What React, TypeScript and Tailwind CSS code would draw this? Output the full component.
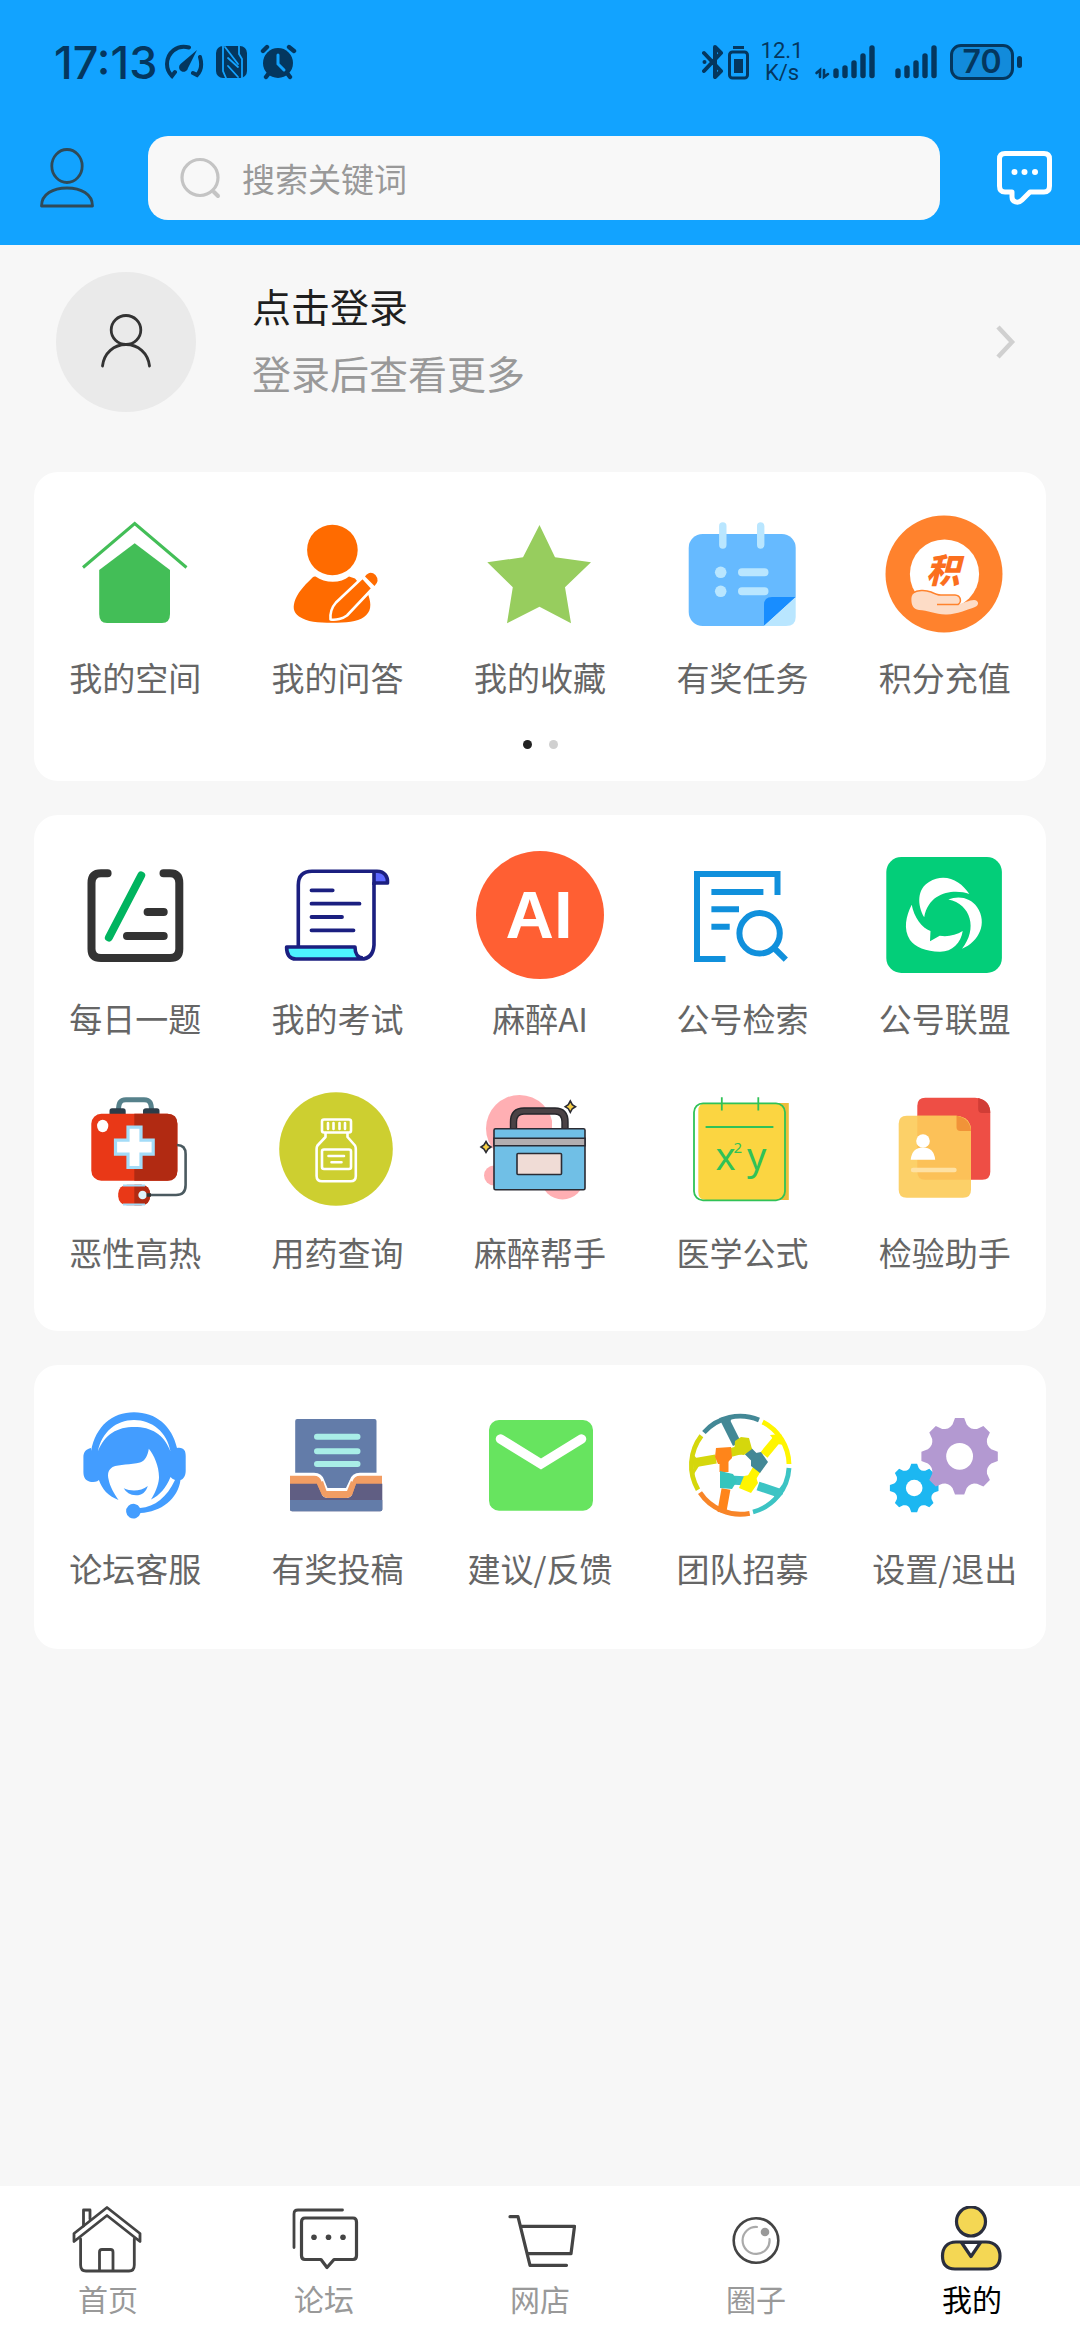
import type { ReactNode } from "react";

type Item = { label: string; icon: ReactNode };

// outline of an eight-toothed gear
const gearPath = (cx: number, cy: number, outer: number, inner: number) => {
  const points: string[] = [];
  for (let i = 0; i < 8; i++) {
    const base = (i * Math.PI) / 4 - Math.PI / 2;
    const at = (r: number, a: number) =>
      `${(cx + r * Math.cos(base + a)).toFixed(1)} ${(cy + r * Math.sin(base + a)).toFixed(1)}`;
    points.push(at(inner, -0.22), at(outer, -0.12), at(outer, 0.12), at(inner, 0.22));
    points.push(at(inner * 0.95, 0.3), at(inner * 0.93, 0.3927), at(inner * 0.95, 0.4854));
  }
  return `M${points.join("L")}Z`;
};

const Svg = ({ children }: { children: ReactNode }) => (
  <svg viewBox="0 0 128 128" className="size-32" fill="none" aria-hidden="true">
    {children}
  </svg>
);

const TabSvg = ({ children }: { children: ReactNode }) => (
  <svg viewBox="0 0 72 72" className="size-18" fill="none" stroke="#444" strokeWidth="3.2" strokeLinecap="round" strokeLinejoin="round" aria-hidden="true">
    {children}
  </svg>
);

const SpaceIcon = () => (
  <Svg>
    <path d="M12 57.5 63.7 13.5 115.5 57.5" stroke="#43be57" strokeWidth="3" />
    <path d="M63.7 33.3 99 60V104Q99 113 91 113H36Q28.2 113 28.2 104V60Z" fill="#43be57" />
  </Svg>
);

const QuestionIcon = () => (
  <Svg>
    <circle cx="58.4" cy="40" r="25.3" fill="#ff6b00" />
    <path d="M41.5 66.5C51 73.5 67 73.5 75 66.5L81 68.5 94 84C98 95 97 102 90 107C83 112 72 112.8 58 112.8C44 112.8 33 112 25 106.5C19 102 18.5 97 21.5 89C25.5 80 33 73 38.5 67.5Q40 66 41.5 66.5Z" fill="#ff6b00" />
    <path d="M88.5 67.5 98.5 78.5 73 105.5C69 108.5 62 110.5 56.5 109.5C56 103 58 97 62 92.5Z" fill="#ff6b00" stroke="#fff" strokeWidth="2.6" strokeLinejoin="round" />
    <path d="M91 66.5Q96 60 101.5 65Q106 70.5 100.5 76Z" fill="#ff6b00" />
  </Svg>
);

const StarIcon = () => (
  <Svg>
    <path d="M63.5 15 79 47.3 115 52.3 89 77.3 95 113.3 63.5 96.7 31 113.3 36.8 77.3 11.3 52.3 47 47.3Z" fill="#97cd5e" />
  </Svg>
);

const TaskIcon = () => (
  <Svg>
    <rect x="10.7" y="24" width="107" height="92" rx="14" fill="#66baff" />
    <path d="M44.8 16V35M82.7 16V35" stroke="#b9e6ff" strokeWidth="7.4" strokeLinecap="round" />
    <circle cx="42.7" cy="62.3" r="5.8" fill="#b9e6ff" />
    <circle cx="42.7" cy="81.3" r="5.8" fill="#b9e6ff" />
    <path d="M64 62.3H86.5M64 81.3H86.5" stroke="#b9e6ff" strokeWidth="8" strokeLinecap="round" />
    <path d="M86 116V95Q86 87 94 87H118V116Z" fill="#188dff" />
    <path d="M86 116 118 87V120H86Z" fill="#fff" />
    <path d="M86 116 117.7 87V107Q117.7 116 108 116Z" fill="#b9e6ff" />
  </Svg>
);

const PointsIcon = () => (
  <Svg>
    <circle cx="63" cy="64" r="58.5" fill="#ff822d" />
    <circle cx="63.5" cy="64" r="34.6" fill="#fff" />
    <text x="62" y="73" textAnchor="middle" fontSize="34" fontWeight="900" fontStyle="italic" fill="#fb6f1e" fontFamily="'Noto Sans CJK SC', sans-serif">积</text>
    <path d="M30.4 90C30 84 34 81 40 81C48 80.5 52 84 58 85H75C81 85.5 81 92 77 94C83 93.5 88 90 93 90C98 90.5 98.5 95 94 97C86 100 76 104 66 104.5C55 105 47 100 38 100C32 99 30.5 95 30.4 90Z" fill="#fddcc6" />
    <path d="M32 83C36 80 44 79.5 50 82C54 84 56 85 60 85H74C80 85.5 81 92 77 94.5H56" stroke="#ff822d" strokeWidth="1.5" />
  </Svg>
);

const DailyIcon = () => (
  <Svg>
    <path d="M36.6 22.3H30Q20.5 22.3 20.5 32V98Q20.5 107 30 107H99Q108.3 107 108.3 98V32Q108.3 22.3 99 22.3H92.5M76.6 61H92.7M56 85H92.7" stroke="#333" strokeWidth="8" strokeLinecap="round" />
    <path d="M70.2 24.5 37.9 86.5" stroke="#00b45f" strokeWidth="8" strokeLinecap="round" />
  </Svg>
);

const ExamIcon = () => (
  <Svg>
    <path d="M101 20.5H103C111 20.5 114 26 113.5 32H100V20.5Z" fill="#5c67ff" />
    <path d="M12.6 96H81C81 101 83 105 87 108H22C15 108 12.6 103 12.6 96Z" fill="#4df3ff" />
    <g stroke="#1b1f80" strokeWidth="3.6" strokeLinejoin="round">
      <path d="M24.3 96V34Q24.3 20.3 38 20.3H103C111 20.3 114 26 113.5 32H100V94Q99 108 87 108H22C15 108 12.6 103 12.6 96H81C81 103 84 107 89 107" />
      <path d="M100 20.5V34" />
    </g>
    <path d="M37.5 39.3H58.7M37.5 52.7H85.5M37.5 66H68M37.5 79.3H79.5" stroke="#1b1f80" strokeWidth="3.8" strokeLinecap="round" />
  </Svg>
);

const AiIcon = () => (
  <Svg>
    <circle cx="64" cy="64" r="64" fill="#ff5f33" />
    <text x="63" y="87" textAnchor="middle" fontSize="67" fontWeight="700" fill="#fff" fontFamily="'Liberation Sans', sans-serif">AI</text>
  </Svg>
);

const SearchDocIcon = () => (
  <Svg>
    <g stroke="#1090dc" strokeWidth="6">
      <path d="M99.5 44V23H19V108H47.5M33.4 41H85.4M33.4 58.3H61M33.4 75.7H51.7" />
      <circle cx="81.6" cy="82.3" r="20.2" />
      <path d="M96.5 97.5 107.8 108.7" />
    </g>
  </Svg>
);

const UnionIcon = () => (
  <Svg>
    <rect x="5.3" y="6" width="115.6" height="116" rx="15" fill="#03ce79" />
    <path d="M43.2 66.3C36 54 36 38 48 31C64 21 80 30 88.3 43C74 38 48 40 43.2 66.3Z" fill="#fff" />
    <path d="M67.3 48.5C78 44 90 47 96 56C107 72 98 91 81 97.7C97 78 90 53 67.3 48.5Z" fill="#fff" />
    <path d="M30.7 53.7C33 66 41 77 49.5 80L49 90.3 58.7 84.7C66 86 75 84.5 81.7 80C80 92 71 101 58.7 100.7C45 100.5 34 96 29 89C22 78 25 65 30.7 53.7Z" fill="#fff" />
  </Svg>
);

const FirstAidIcon = () => (
  <Svg>
    <path d="M47.5 26C47.5 18 49 14.7 55 14.7H73C79 14.7 80.5 18 80.5 26" stroke="#56818b" strokeWidth="5" />
    <path d="M38.5 29V26Q38.5 23.3 41 23.3H52Q54.7 23.3 54.7 26V29ZM72 29V26Q72 23.3 75 23.3H86Q88.5 23.3 88.5 26V29Z" fill="#2c3c48" />
    <rect x="20.3" y="28.7" width="86.1" height="67" rx="10" fill="#e93817" />
    <path d="M63.3 28.7H96.4Q106.4 28.7 106.4 38.7V85.7Q106.4 95.7 96.4 95.7H63.3Z" fill="#b12a12" />
    <ellipse cx="31.7" cy="41" rx="5.6" ry="6.2" fill="#fff" />
    <path d="M57 42.2H70V55.2H82.2V69.2H70V82.5H57V69.2H44.5V55.2H57Z" fill="#fff" stroke="#a3dcf8" strokeWidth="3.2" />
    <path d="M106 60C112 60 114.6 63 114.6 69V100Q114.6 110 105 110H77" stroke="#4b5a60" strokeWidth="2.6" />
    <rect x="47.2" y="99.7" width="32" height="20.6" rx="9" fill="#e93817" />
    <path d="M63.3 99.7H70Q79.2 100 79.2 110Q79.2 120 70 120.3H63.3Z" fill="#b12a12" />
    <path d="M52 100.5H74M52 119.5H74" stroke="#a3dcf8" strokeWidth="2" />
    <circle cx="71.6" cy="110" r="4.3" fill="#dff3fb" />
    <path d="M75.5 110H80" stroke="#333" strokeWidth="3.5" />
  </Svg>
);

const DrugIcon = () => (
  <Svg>
    <circle cx="62" cy="64" r="56.8" fill="#cdcf30" />
    <g stroke="#fff" strokeWidth="2.6" strokeLinejoin="round" strokeLinecap="round">
      <rect x="48" y="34.5" width="29" height="13" rx="2" />
      <path d="M54 38V44M59.5 38V44M65.5 38V44M71 38V44M51.5 48V52L43.5 60.5Q42.6 62 42.6 64V91Q42.6 96.3 48 96.3H76.5Q81.8 96.3 81.8 91V64Q81.8 62 81 60.5L73.5 52V48" />
      <rect x="48" y="64.5" width="29" height="19.5" rx="2" />
      <path d="M54.5 71H70M57.5 77.3H67.5" />
    </g>
  </Svg>
);

const HelperIcon = () => (
  <Svg>
    <circle cx="43.5" cy="43.5" r="33.5" fill="#ffafb3" />
    <circle cx="18" cy="90.5" r="10" fill="#ffafb3" />
    <circle cx="86.5" cy="93" r="21.5" fill="#ffafb3" />
    <path d="M76 22H92V44H76Z" fill="#fff" />
    <path d="M37.5 44V37Q37.5 26 48 26H79Q89 26 89 37V44" stroke="#26262b" strokeWidth="7.4" />
    <path d="M37.5 44V37Q37.5 26 48 26H79Q89 26 89 37V44" stroke="#4a4245" strokeWidth="4.6" />
    <g stroke="#2b2b33" strokeWidth="1.6">
      <rect x="18" y="43.7" width="91" height="61" rx="1.5" fill="#70bfe6" />
      <path d="M18 53.3H109V60.7H18Z" fill="#b3aeb0" />
      <rect x="41" y="68.5" width="44.5" height="21" rx="1" fill="#f0dcd6" />
      <path d="M10 56.5 12 60 15 62 12 64 10 67.5 8 64 5 62 8 60ZM94.3 16 96.3 19.7 99.5 21.7 96.3 23.7 94.3 27.4 92.3 23.7 89.2 21.7 92.3 19.7Z" fill="#f7cf45" />
    </g>
  </Svg>
);

const FormulaIcon = () => (
  <Svg>
    <path d="M28 18H110.6V115H28Q20.3 115 20.3 107V26Q20.3 18 28 18Z" fill="#fbd541" />
    <path d="M98 18H110.6V115H98Q107 115 107 106V27Q107 18 98 18Z" fill="#edbd3a" />
    <rect x="16" y="18.3" width="91" height="97" rx="9" stroke="#30c257" strokeWidth="1.8" />
    <path d="M43.8 12.3V25.5M80.3 12.3V25.5M27.6 42H95.4" stroke="#30c257" strokeWidth="1.8" />
    <g fill="#30c257" fontFamily="'Noto Sans', 'Open Sans', sans-serif">
      <text x="37.5" y="84.7" fontSize="38">x</text>
      <text x="55.5" y="67.7" fontSize="15">2</text>
      <text x="69" y="84.7" fontSize="38">y</text>
    </g>
  </Svg>
);

const CheckupIcon = () => (
  <Svg>
    <path d="M44.3 12.7H94Q109.3 14 109.3 29V86.7Q109.3 94.7 101.3 94.7H44.3Q36.3 94.7 36.3 86.7V20.7Q36.3 12.7 44.3 12.7Z" fill="#ee4e45" />
    <path d="M97.2 13Q109.3 16 109.3 28H101Q97.2 28 97.2 24Z" fill="#d13d36" />
    <path d="M25.7 30.7H75Q90 32 90 46V104.7Q90 112.7 82 112.7H25.7Q17.7 112.7 17.7 104.7V38.7Q17.7 30.7 25.7 30.7Z" fill="#fcd068" />
    <path d="M36.3 30.7H75Q90 32 90 46V94.7H44.3Q36.3 94.7 36.3 86.7Z" fill="#fcc158" />
    <path d="M75.5 30.7Q89 33 90 46H79.5Q75.5 46 75.5 42Z" fill="#f19338" />
    <circle cx="42" cy="56" r="6.8" fill="#fff" />
    <path d="M29.7 74.7Q31 62.5 42 62.5Q53 62.5 54.2 74.7Z" fill="#fff" />
    <path d="M32 85H73.5" stroke="#fee1a3" strokeWidth="4.4" strokeLinecap="round" />
  </Svg>
);

const ServiceIcon = () => (
  <Svg>
    <path d="M20 50C25 25 41 11.3 63 11.3C85 11.3 101 25 106 47C113 46 114.7 50 114.7 55V70C114.7 76 111 79 109.5 79C107 98 90 111 69.5 112A7.3 7.3 0 1 1 69 107C84 106 96 96 104 79Q101 78 99.5 76C95 87 89 94 80 98.5C86 89 88 81 88 76C88 65 83 54 77.8 47.7C77 54 74 60 69 61.5C60 64 48 63 41.6 66C37 69 36.5 73 37.5 78C39 86 43 92 47.5 99C37 95 31 88 27.9 79C26 81 23 81 20 81C15 80 12.4 77 12.4 71V56C12.4 51 15 48 20 47Z" fill="#439dff" />
    <path d="M26.8 50.5C31 31 45 19 63 19C81 19 96 31 99.5 50.5C93 33 80 26 63.5 26C46 26 34 33 26.8 50.5Z" fill="#fff" />
    <path d="M52.7 87.3C61 91 70 90 76.8 85C75 91 71 94.3 65 94.3C59 94.3 55 91 52.7 87.3Z" fill="#439dff" />
  </Svg>
);

const SubmitIcon = () => (
  <Svg>
    <path d="M23.2 18H100.5Q102.5 18 102.5 20V90H21.2V20Q21.2 18 23.2 18Z" fill="#637ca9" />
    <path d="M43 35.7H83.5M43 50.3H83.5M43 63H83.5" stroke="#a9eee7" strokeWidth="6" strokeLinecap="round" />
    <path d="M16 73.3H40Q47 73.3 49 80L52.5 88.5H73L77 80Q79 73.3 86 73.3H108V94H16Z" fill="#f29d63" />
    <path d="M14 73.3H40Q47 73.3 49 80L52.5 88.5H73L77 80Q79 73.3 86 73.3H110" stroke="#fff" strokeWidth="3" />
    <path d="M16 82.7H43L48 94Q50 97 53 97H73Q76 97 78 94L82 82.7H108.3V108.3Q108.3 110.3 106.3 110.3H18Q16 110.3 16 108.3Z" fill="#605e83" />
    <path d="M43 82.7 48 94Q50 97 53 97H73Q76 97 78 94L82 82.7 77 80 73 90H52.5L49 80Z" fill="#f29d63" />
    <path d="M16 99H108.3V108.3Q108.3 110.3 106.3 110.3H18Q16 110.3 16 108.3Z" fill="#637ca9" />
  </Svg>
);

const FeedbackIcon = () => (
  <Svg>
    <rect x="13" y="19" width="104" height="90.7" rx="10" fill="#67e45f" />
    <path d="M24.5 38 65 63 105.5 38" stroke="#fff" strokeWidth="9.5" strokeLinecap="round" />
  </Svg>
);

const TeamIcon = () => (
  <Svg>
    <g strokeWidth="4.8">
      <path d="M25.9 31.5A48.5 48.5 0 0 1 81 19" stroke="#438896" />
      <path d="M84.7 21A48.5 48.5 0 0 1 111 63" stroke="#fff500" />
      <path d="M111 67A48.5 48.5 0 0 1 75 111" stroke="#3cc4c4" />
      <path d="M71.7 112.3A48.5 48.5 0 0 1 22 91.7" stroke="#f88528" />
      <path d="M20 88.7A48.5 48.5 0 0 1 23.4 34.7" stroke="#d5d70c" />
    </g>
    <g strokeWidth="9">
      <path d="M47 19 59 43M70 50 80 60" stroke="#438896" />
      <path d="M100 37 86 54M79 68 73 78" stroke="#fff500" />
      <path d="M101 92 80 85M70 80 52 79" stroke="#3cc4c4" />
      <path d="M44 110 48 88M46 71V57" stroke="#ff851a" />
      <path d="M15 62 38 58M51 52 62 49" stroke="#d5d70c" />
    </g>
    <path d="M41 17 55 15 51 23 45 22Z" fill="#438896" />
    <path d="M92 34 103 33 107 44 99 43Z" fill="#fff500" />
    <path d="M104 84 105 93 95 102 97 93Z" fill="#3cc4c4" />
    <path d="M35 104 54 112 40 111Z" fill="#f88528" />
    <path d="M15 53 20 59 21 65 16 73Z" fill="#d5d70c" />
    <path d="M38 47 53 46 54 57 48 63H40L37 56Z" fill="#ff851a" />
    <path d="M57 40 63 36 71 37 74 48 66 54 56 53Z" fill="#d5d70c" />
    <path d="M73 53 83 51 90 61 82 72 73 65Z" fill="#438896" />
    <path d="M66 75 77 73 80 82 73 92 61 87Z" fill="#fff500" />
    <path d="M42 70 55 73 59 80 54 88 42 87Z" fill="#35c5bd" />
  </Svg>
);

const SettingsIcon = () => (
  <Svg>
    <path d={gearPath(33.2, 87, 24.5, 20.5)} fill="#1cb7f1" />
    <circle cx="33.2" cy="87" r="8.3" fill="#fff" />
    <path d={gearPath(78.6, 55.3, 38.5, 32.5)} fill="#b399d1" />
    <circle cx="78.6" cy="55.3" r="13.4" fill="#fff" />
  </Svg>
);

const spaceItems: Item[] = [
  { label: "我的空间", icon: <SpaceIcon /> },
  { label: "我的问答", icon: <QuestionIcon /> },
  { label: "我的收藏", icon: <StarIcon /> },
  { label: "有奖任务", icon: <TaskIcon /> },
  { label: "积分充值", icon: <PointsIcon /> },
];

const toolItems: Item[] = [
  { label: "每日一题", icon: <DailyIcon /> },
  { label: "我的考试", icon: <ExamIcon /> },
  { label: "麻醉AI", icon: <AiIcon /> },
  { label: "公号检索", icon: <SearchDocIcon /> },
  { label: "公号联盟", icon: <UnionIcon /> },
  { label: "恶性高热", icon: <FirstAidIcon /> },
  { label: "用药查询", icon: <DrugIcon /> },
  { label: "麻醉帮手", icon: <HelperIcon /> },
  { label: "医学公式", icon: <FormulaIcon /> },
  { label: "检验助手", icon: <CheckupIcon /> },
];

const serviceItems: Item[] = [
  { label: "论坛客服", icon: <ServiceIcon /> },
  { label: "有奖投稿", icon: <SubmitIcon /> },
  { label: "建议/反馈", icon: <FeedbackIcon /> },
  { label: "团队招募", icon: <TeamIcon /> },
  { label: "设置/退出", icon: <SettingsIcon /> },
];

const tabs: Item[] = [
  {
    label: "首页",
    icon: (
      <TabSvg>
        <g strokeWidth="2.8">
          <path d="M11.5 20V4H18V13" />
          <path d="M8.6 33V59Q8.6 65 14 65H57Q62.3 65 62.3 59V33" />
          <path d="M35 1.5 2 27.5V35.5L35 9.5 68 35.5V27.5Z" />
          <path d="M27.5 64V46Q27.5 43.5 30 43.5H38.5Q41 43.5 41 46V64" />
        </g>
      </TabSvg>
    ),
  },
  {
    label: "论坛",
    icon: (
      <TabSvg>
        <path d="M6 41.5V8Q6 4 10 4H54.5" strokeWidth="2.8" />
        <path d="M17 12H65Q68.5 12 68.5 16V49.5Q68.5 53.5 65 53.5H46L39 61.5 33 53.5H17Q13.5 53.5 13.5 49.5V16Q13.5 12 17 12Z" />
        <g fill="#444" stroke="none">
          <circle cx="26" cy="31.3" r="2.8" />
          <circle cx="40.5" cy="31.3" r="2.8" />
          <circle cx="55" cy="31.3" r="2.8" />
        </g>
      </TabSvg>
    ),
  },
  {
    label: "网店",
    icon: (
      <TabSvg>
        <path d="M6 10.7H14L26 59.3H62.5M17 20.3H70.5L67 47.7H23.5" />
      </TabSvg>
    ),
  },
  {
    label: "圈子",
    icon: (
      <TabSvg>
        <circle cx="36" cy="34.5" r="22.3" strokeWidth="2.6" />
        <path d="M37 21A13.5 13.5 0 1 0 49.5 33" stroke="#aaa" strokeWidth="2.2" />
        <circle cx="45" cy="26" r="4.3" fill="#999" stroke="none" />
      </TabSvg>
    ),
  },
  {
    label: "我的",
    icon: (
      <TabSvg>
        <g stroke="#2a2e3d" fill="#f4d754">
          <circle cx="35" cy="15.5" r="14.5" />
          <path d="M20 36H50C60 36 64 43 64 50C64 58 60 63 52 63H19C10 63 6.5 58 6.5 50C6.5 42 11 36 20 36Z" />
          <path d="M25.5 36.5 35 50.5 44.5 36.5Z" fill="#fff" />
        </g>
      </TabSvg>
    ),
  },
];

const IconGrid = ({ items }: { items: Item[] }) => (
  <div className="grid grid-cols-5 gap-y-11">
    {items.map((item) => (
      <a href="#" key={item.label} className="flex flex-col items-center gap-4">
        {item.icon}
        <span className="whitespace-nowrap text-[33px] leading-[46px] text-[#666]">{item.label}</span>
      </a>
    ))}
  </div>
);

const StatusBar = () => (
  <div className="flex h-31 items-center justify-between pl-[54px] pr-[58px] text-[#04375f]">
    <div className="flex items-center gap-2">
      <span className="font-[Inter] text-[45px] leading-none font-medium">17:13</span>
      <svg viewBox="0 0 132 36" className="h-9 w-33" fill="none" stroke="currentColor" strokeLinecap="round" aria-hidden="true">
        <path d="M24 3.5C12 0 2 9 2 20C2 25 4 29 7 32L10 28M35 13C37 20 36 27 32 31L28 29" strokeWidth="4" />
        <path d="M32 6 23 24A4.5 4.5 0 1 1 15.5 20Z" fill="currentColor" stroke="none" />
        <rect x="51" y="2" width="31" height="32" rx="7" fill="currentColor" stroke="none" />
        <path d="M58 2V27L61 34M60 3 73 20M63 14 73 23M63 22 73 33M74 2V10L77 15V34" stroke="#12a3ff" strokeWidth="1.8" />
        <circle cx="113" cy="19" r="15" fill="currentColor" stroke="none" />
        <path d="M98 7 102 3M124 3 129 7M101 33 104 29M125 33 122 29" strokeWidth="4.4" />
        <path d="M113 11V20L119 26" stroke="#12a3ff" strokeWidth="3" />
      </svg>
    </div>
    <div className="flex items-center">
      <svg viewBox="0 0 48 36" className="h-9 w-12" fill="none" stroke="currentColor" aria-hidden="true">
        <path d="M2 9 19 27 13 33V3L19 9 2 27" strokeWidth="4" strokeLinejoin="round" strokeLinecap="round" />
        <circle cx="2.5" cy="18" r="2" fill="currentColor" stroke="none" />
        <rect x="27.5" y="8" width="18" height="26" rx="3" strokeWidth="3" />
        <path d="M32 15H41V29H32ZM31 2H42V5H31Z" fill="currentColor" stroke="none" />
      </svg>
      <span className="ml-2 flex w-12 flex-col items-center font-[Roboto] text-[22px] leading-[22px]">
        <span>12.1</span>
        <span>K/s</span>
      </span>
      <svg viewBox="0 0 128 36" className="ml-2 h-9 w-32" fill="none" stroke="currentColor" strokeWidth="5.4" strokeLinecap="round" aria-hidden="true">
        <path d="M2.500 29 6 26V33M10 26V33L14 30" strokeWidth="2.6" />
        <path d="M22 27V31.5M31 24V31.5M40 19V31.5M49 12V31.5M58 4V31.5" />
        <path d="M84 27V31.5M93 24V31.5M102 19V31.5M111 12V31.5M120 4V31.5" />
      </svg>
      <span className="ml-2 flex h-9 w-16 items-center justify-center rounded-[11px] border-3 border-current bg-[#128bdb] font-[Inter] text-[32px] leading-none font-semibold">70</span>
      <span className="ml-[3px] h-3 w-[5px] rounded-full bg-current" />
    </div>
  </div>
);

const App = () => {
  return (
    <div className="flex min-h-screen flex-col bg-[#f7f7f7] font-['Noto_Sans_CJK_SC',sans-serif]">
      <header className="bg-[#12a3ff]">
        <StatusBar />
        <div className="flex items-center pt-3 pr-7 pb-[25px] pl-10">
          <button type="button" aria-label="个人中心">
            <svg viewBox="0 0 54 60" className="h-15 w-[54px]" fill="none" stroke="#2f4a58" strokeWidth="2.8" strokeLinejoin="round" aria-hidden="true">
              <ellipse cx="27" cy="18" rx="15.2" ry="16.5" />
              <path d="M1.500 58C1.500 46 13 40 27 40C41 40 52.500 46 52.500 58Z" />
            </svg>
          </button>
          <label className="ml-[54px] flex h-21 flex-1 items-center gap-5 rounded-[20px] bg-[#f8f8f8] pl-8">
            <svg viewBox="0 0 42 42" className="size-[42px]" fill="none" stroke="#c4c4c4" strokeWidth="3.2" strokeLinecap="round" aria-hidden="true">
              <circle cx="20" cy="20.5" r="18" />
              <path d="M34 35 38 39" strokeWidth="4" />
            </svg>
            <input type="search" aria-label="搜索" placeholder="搜索关键词" className="min-w-0 flex-1 bg-transparent text-[33px] leading-[50px] outline-none placeholder:text-[#999]" />
          </label>
          <button type="button" aria-label="消息" className="ml-[57px]">
            <svg viewBox="0 0 55 58" className="h-[58px] w-[55px]" fill="none" stroke="#fff" strokeWidth="5" strokeLinejoin="round" aria-hidden="true">
              <path d="M8 4.500H47Q52.500 4.500 52.500 10V37Q52.500 43 47 43H33L25 51C21 55 15 53 15 48V43H8Q2.500 43 2.500 37V10Q2.500 4.500 8 4.500Z" />
              <g fill="#fff" stroke="none">
                <circle cx="17.5" cy="23" r="3" />
                <circle cx="27.5" cy="23" r="3" />
                <circle cx="38" cy="23" r="3" />
              </g>
            </svg>
          </button>
        </div>
      </header>

      <main className="flex flex-1 flex-col">
        <a href="#" className="flex items-center gap-14 pt-[27px] pr-16 pb-[60px] pl-14">
          <span className="flex size-35 items-center justify-center rounded-full bg-[#eaeaea]">
            <svg viewBox="0 0 52 56" className="h-14 w-13" fill="none" stroke="#333" strokeWidth="2.8" strokeLinecap="round" aria-hidden="true">
              <ellipse cx="26" cy="16" rx="14.8" ry="14.5" />
              <path d="M2.500 52C4 39 14 30.500 26 30.500C38 30.500 48 39 49.500 52" />
            </svg>
          </span>
          <span className="flex flex-1 flex-col gap-[11px] pb-2 text-[39px] leading-14">
            <span className="text-[#1f1f1f]">点击登录</span>
            <span className="text-[#999]">登录后查看更多</span>
          </span>
          <svg viewBox="0 0 22 36" className="h-9 w-[22px]" fill="none" stroke="#d0d0d0" strokeWidth="4.5" aria-hidden="true">
            <path d="M4 3 18 18 4 33" />
          </svg>
        </a>

        <div className="mb-9 flex flex-col gap-[34px] px-[34px]">
          <section className="rounded-3xl bg-white pt-[38px] pb-8">
            <IconGrid items={spaceItems} />
            <div className="mt-10 flex justify-center gap-[17px]">
              <button type="button" aria-label="第1页" className="size-[9px] rounded-full bg-[#222]" />
              <button type="button" aria-label="第2页" className="size-[9px] rounded-full bg-[#d0d0d0]" />
            </div>
          </section>
          <section className="rounded-3xl bg-white pt-9 pb-14">
            <IconGrid items={toolItems} />
          </section>
          <section className="rounded-3xl bg-white pt-9 pb-[58px]">
            <IconGrid items={serviceItems} />
          </section>
        </div>
      </main>

      <nav className="grid grid-cols-5 bg-white pt-5 pb-[17px]">
        {tabs.map((tab) => (
          <a href="#" key={tab.label} className="flex flex-col items-center gap-1 text-[#999] last:text-black">
            {tab.icon}
            <span className="text-[30px] leading-8">{tab.label}</span>
          </a>
        ))}
      </nav>
    </div>
  );
};

export default App;
